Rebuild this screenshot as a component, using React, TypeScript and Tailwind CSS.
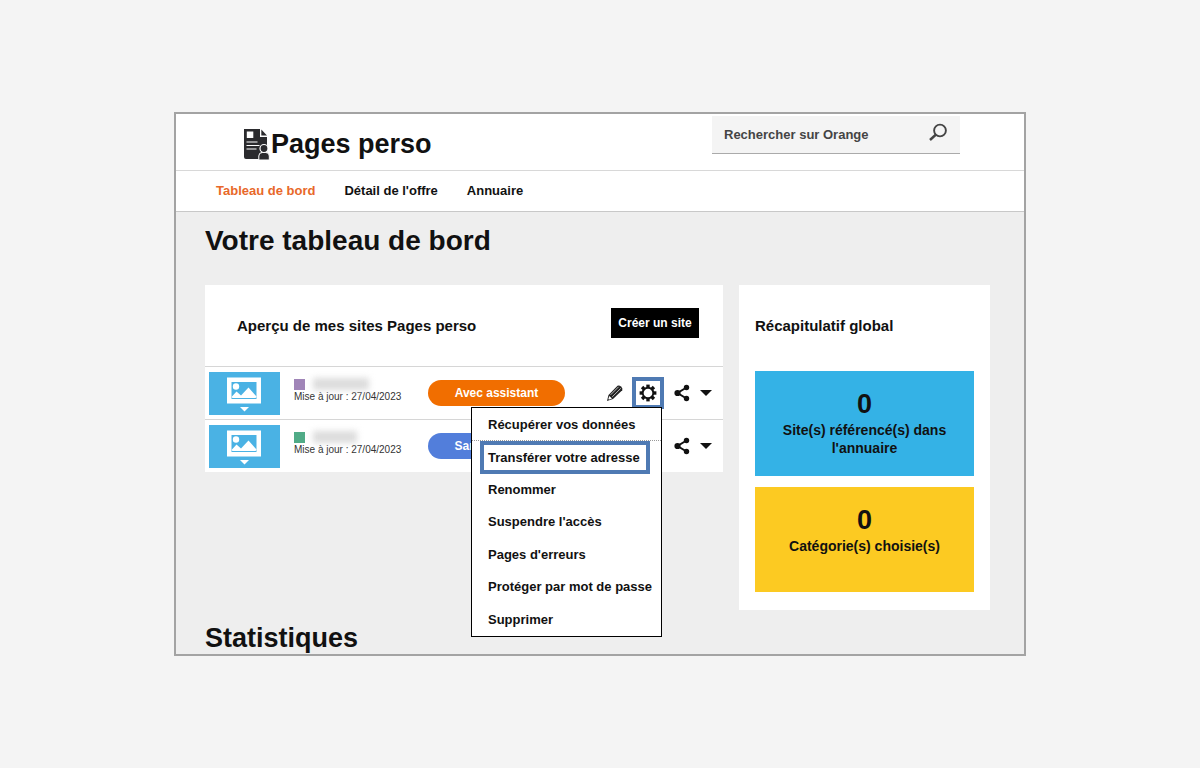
import React from "react";

const menuItems = [
  "Récupérer vos données",
  "Transférer votre adresse",
  "Renommer",
  "Suspendre l'accès",
  "Pages d'erreurs",
  "Protéger par mot de passe",
  "Supprimer",
];

type Site = {
  id: string;
  kind: string;
  pill: string;
  square: string;
  nameWidth: string;
  open: boolean;
};

const sites: Site[] = [
  { id: "a", kind: "Avec assistant", pill: "bg-[#f16e00]", square: "bg-[#a085b8]", nameWidth: "w-14", open: true },
  { id: "b", kind: "Sans assistant", pill: "bg-[#527edb]", square: "bg-[#50ab87]", nameWidth: "w-11", open: false },
];

function PagesLogo() {
  return (
    <svg viewBox="0 0 28 32" className="h-8 w-7 shrink-0" aria-hidden="true">
      <path d="M1 1h16v8h7v11a5 5 0 0 0-5 8l-2 3H3a2 2 0 0 1-2-2z" fill="#2b2b2e" />
      <path d="M18.300 1.500v6H24z" fill="#2b2b2e" />
      <rect x="3.800" y="3.500" width="6.500" height="6.500" fill="#fff" />
      <path d="M3.500 14h11M3.500 17.500h13M3.500 21h10" stroke="#fff" strokeWidth="1.200" />
      <path d="M15.800 32v-4q0-3.500 3.500-3.500h3.500q3.500 0 3.500 3.500v4z" fill="#2b2b2e" stroke="#fff" strokeWidth="1" />
      <circle cx="21" cy="20.500" r="4" fill="#2b2b2e" stroke="#fff" strokeWidth="1.200" />
    </svg>
  );
}

function SearchIcon() {
  return (
    <svg viewBox="0 0 20 20" className="size-5" fill="none" stroke="#444" aria-hidden="true">
      <circle cx="12" cy="7.500" r="5.900" strokeWidth="1.900" />
      <path d="M8 11.500 2 17" strokeWidth="2.400" />
    </svg>
  );
}

function Thumbnail() {
  return (
    <svg viewBox="0 0 71 43" className="h-[43px] w-[71px] shrink-0 bg-[#4ab2e4]" aria-hidden="true">
      <rect x="18" y="5.500" width="34" height="26" fill="#fff" />
      <rect x="22.500" y="10" width="25" height="17" fill="#4ab2e4" />
      <circle cx="27" cy="14.500" r="3.200" fill="#fff" />
      <path d="M22.500 25l5-5.500 4.500 4 7.500-8 8 9v.5l-1 1h-23z" fill="#fff" />
      <path d="M31 35h9l-4.500 4.500z" fill="#fff" />
    </svg>
  );
}

function PencilIcon() {
  return (
    <svg viewBox="0 0 18 18" className="size-[18px]" aria-hidden="true">
      <path d="M1 17l1.500-6L11.500 1.800q1.500-1 3.500.6 2.200 1.900 1.200 3.800L7 15z" fill="#222" />
      <path d="M4.600 10.800l8-8M6.200 12.900l8.600-8.600" stroke="#fff" strokeWidth=".7" />
      <path d="M2.300 15.200l1-3.200 2.700 2.600-2.500 1z" fill="#fff" />
    </svg>
  );
}

function GearIcon() {
  return (
    <svg viewBox="-9 -9 18 18" className="size-[18px]" aria-hidden="true">
      <g fill="#111">
        {[0, 45, 90, 135, 180, 225, 270, 315].map((a) => (
          <path key={a} d="M-1.700-5.500v-2.900h3.400v2.900z" transform={`rotate(${a})`} />
        ))}
      </g>
      <circle r="5.300" fill="none" stroke="#111" strokeWidth="1.900" />
    </svg>
  );
}

function ShareIcon() {
  return (
    <svg viewBox="0 0 16 18" className="h-[18px] w-4" aria-hidden="true">
      <path d="M12.500 3.500 3.500 9l9 5.500" fill="none" stroke="#111" strokeWidth="2" />
      <circle cx="12.500" cy="3.500" r="2.700" fill="#111" />
      <circle cx="3.500" cy="9" r="3.100" fill="#111" />
      <circle cx="12.500" cy="14.500" r="2.700" fill="#111" />
    </svg>
  );
}

function SettingsMenu() {
  return (
    <ul className="absolute right-0.5 top-full z-10 -mt-0.5 grid h-[230px] w-[191px] grid-rows-7 border border-black bg-white pt-px">
      {menuItems.map((item, i) => (
        <li key={item} className={i === 0 ? "flex border-b border-dotted border-[#999]" : "flex"}>
          {i === 1 ? (
            <button className="ml-2 mr-[11px] flex-1 whitespace-nowrap border-4 border-[#4f7ab3] pl-1 text-left text-[13px] font-bold leading-4">
              {item}
            </button>
          ) : (
            <button className="flex-1 whitespace-nowrap pl-4 text-left text-[13px] font-bold leading-4">{item}</button>
          )}
        </li>
      ))}
    </ul>
  );
}

function SiteRow({ site }: { site: Site }) {
  return (
    <li className="flex h-[53px] items-center border-t border-[#d6d6d6] pl-1 pr-[11px]">
      <Thumbnail />
      <div className="ml-3.5 w-[134px] pb-1.5">
        <div className="flex h-3.5 items-center gap-2">
          <span className={`size-[11px] ${site.square}`} />
          <span className={`h-3 bg-[#dcdcdc] blur-[3px] ${site.nameWidth}`} />
        </div>
        <p className="whitespace-nowrap text-[10px] leading-3 text-[#333]">Mise à jour : 27/04/2023</p>
      </div>
      <span className={`flex h-[26px] w-[137px] items-center justify-center rounded-full text-xs font-bold text-white ${site.pill}`}>
        {site.kind}
      </span>
      <div className="ml-auto flex items-center">
        <button aria-label="Modifier" className="mr-2">
          <PencilIcon />
        </button>
        <div className="relative">
          <button
            aria-label="Paramètres"
            className={`flex size-8 items-center justify-center border-4 ${site.open ? "border-[#4f7ab3]" : "border-transparent"}`}
          >
            <GearIcon />
          </button>
          {site.open && <SettingsMenu />}
        </div>
        <button aria-label="Partager" className="mx-2.5">
          <ShareIcon />
        </button>
        <button aria-label="Plus d'options">
          <svg viewBox="0 0 12 6" className="h-1.5 w-3" aria-hidden="true">
            <path d="M0 0h12L6 6z" fill="#111" />
          </svg>
        </button>
      </div>
    </li>
  );
}

function Tile({ color, label }: { color: string; label: string }) {
  return (
    <div className={`h-[105px] px-5 pt-4 text-center font-bold ${color}`}>
      <p className="text-[27px] leading-[34px]">0</p>
      <p className="text-sm leading-[18px]">{label}</p>
    </div>
  );
}

export default function App() {
  return (
    <div className="flex min-h-screen items-center justify-center bg-[#f4f4f4] font-['Liberation_Sans',Arial,sans-serif] text-[#111]">
      <div className="w-full max-w-[852px] overflow-hidden border-2 border-[#a3a3a3] bg-[#eee]">
        <header className="bg-white">
          <div className="flex h-[57px] items-start justify-between border-b border-[#d8d8d8] pl-[67px] pr-16">
            <div className="flex items-center pt-3">
              <PagesLogo />
              <span className="text-[27px] font-bold leading-9">Pages perso</span>
            </div>
            <div className="mt-0.5 flex h-[38px] w-[248px] items-center border-b border-[#aaa] bg-[#f4f4f4] px-3">
              <input
                type="text"
                aria-label="Rechercher sur Orange"
                placeholder="Rechercher sur Orange"
                className="min-w-0 flex-1 bg-transparent text-[13px] font-bold outline-none placeholder:text-[#444]"
              />
              <button aria-label="Lancer la recherche" className="pb-1">
                <SearchIcon />
              </button>
            </div>
          </div>
          <nav className="flex h-[41px] items-center gap-[29px] border-b border-[#c8c8c8] pl-10 text-[13px] font-bold">
            <a href="#tableau" className="text-[#e8682a]">Tableau de bord</a>
            <a href="#offre">Détail de l'offre</a>
            <a href="#annuaire">Annuaire</a>
          </nav>
        </header>
        <main className="pl-[29px] pr-[34px] pt-[11px]">
          <h1 className="text-[28px] font-bold leading-9">Votre tableau de bord</h1>
          <div className="mt-[26px] flex items-start gap-4">
            <section className="min-w-0 flex-1 bg-white">
              <div className="flex h-[81px] items-center justify-between pl-8 pr-6">
                <h2 className="pt-0.5 text-[15px] font-bold">Aperçu de mes sites Pages perso</h2>
                <button className="-mt-1.5 h-[30px] w-[88px] whitespace-nowrap bg-black text-xs font-bold text-white">
                  Créer un site
                </button>
              </div>
              <ul>
                {sites.map((site) => (
                  <SiteRow key={site.id} site={site} />
                ))}
              </ul>
            </section>
            <section className="w-[251px] bg-white px-4 pb-[18px]">
              <h2 className="flex h-[81px] items-center pt-0.5 text-[15px] font-bold">Récapitulatif global</h2>
              <div className="mt-[5px] grid gap-[11px]">
                <Tile color="bg-[#34b2e6]" label="Site(s) référencé(s) dans l'annuaire" />
                <Tile color="bg-[#fcca22]" label="Catégorie(s) choisie(s)" />
              </div>
            </section>
          </div>
          <h2 className="mt-3 text-[27px] font-bold leading-8">Statistiques</h2>
        </main>
      </div>
    </div>
  );
}
